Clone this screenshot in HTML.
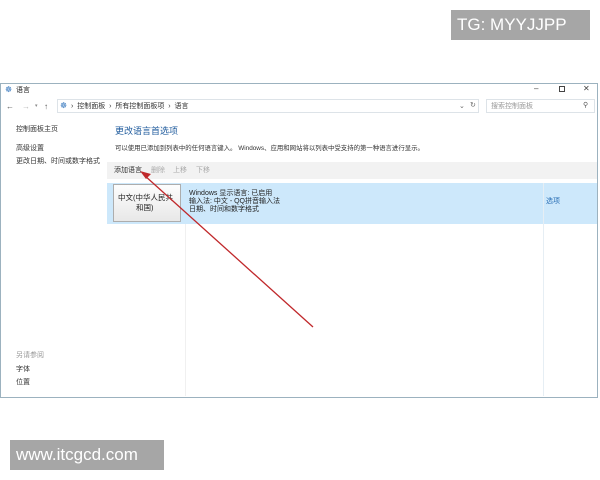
<!DOCTYPE html>
<html><head><meta charset="utf-8"><style>
*{margin:0;padding:0;box-sizing:border-box}
body{width:600px;height:480px;background:#fff;position:relative;overflow:hidden;font-family:"Liberation Sans","Noto Sans CJK SC",sans-serif;font-size:7px;color:#222}
.a{position:absolute;white-space:nowrap;line-height:1}
#win{position:absolute;left:0;top:83px;width:598px;height:315px;border:1px solid #9cb2bf;background:#fff}
.wm{position:absolute;background:#a6a6a6;color:#fff;font-size:17px;line-height:30px;padding-left:6px}
</style></head><body>
<div class="wm" style="left:451px;top:10px;width:139px;height:30px">TG: MYYJJPP</div>
<div class="wm" style="left:10px;top:440px;width:154px;height:30px">www.itcgcd.com</div>
<div id="win"></div>
<div class="a" style="left:5px;top:86px;font-size:8px;color:#3a7abf">☸</div>
<div class="a" style="left:16px;top:87px">语言</div>
<div class="a" style="left:534px;top:85px;font-size:8px;color:#444">–</div>
<div style="position:absolute;left:559px;top:86px;width:6px;height:6px;border:1px solid #444"></div>
<div class="a" style="left:583px;top:85px;font-size:8px;color:#444">✕</div>
<div class="a" style="left:6px;top:103px;font-size:8px;color:#555">←</div>
<div class="a" style="left:22px;top:103px;font-size:8px;color:#bbb">→</div>
<div class="a" style="left:35px;top:104px;font-size:5px;color:#888">▾</div>
<div class="a" style="left:44px;top:103px;font-size:8px;color:#555">↑</div>
<div style="position:absolute;left:57px;top:99px;width:422px;height:14px;border:1px solid #dde3e8"></div>
<div class="a" style="left:60px;top:102px;font-size:8px;color:#3a7abf">☸</div>
<div class="a" style="left:71px;top:103px;color:#333">›&nbsp;&nbsp;控制面板&nbsp;&nbsp;›&nbsp;&nbsp;所有控制面板项&nbsp;&nbsp;›&nbsp;&nbsp;语言</div>
<div class="a" style="left:459px;top:103px;color:#666">⌄</div>
<div class="a" style="left:470px;top:102px;color:#666">↻</div>
<div style="position:absolute;left:486px;top:99px;width:109px;height:14px;border:1px solid #dde3e8"></div>
<div class="a" style="left:491px;top:103px;color:#999">搜索控制面板</div>
<div class="a" style="left:583px;top:102px;color:#555">⚲</div>
<div class="a" style="left:16px;top:126px;color:#333">控制面板主页</div>
<div class="a" style="left:16px;top:145px;color:#333">高级设置</div>
<div class="a" style="left:16px;top:158px;color:#333">更改日期、时间或数字格式</div>
<div class="a" style="left:16px;top:352px;color:#999">另请参阅</div>
<div class="a" style="left:16px;top:366px;color:#333">字体</div>
<div class="a" style="left:16px;top:379px;color:#333">位置</div>
<div class="a" style="left:115px;top:127px;font-size:9px;color:#1e5a9c">更改语言首选项</div>
<div class="a" style="left:115px;top:146px;color:#333;font-size:6.4px">可以使用已添加到列表中的任何语言键入。 Windows、应用和网站将以列表中受支持的第一种语言进行显示。</div>
<div style="position:absolute;left:107px;top:162px;width:490px;height:17px;background:#f2f2f2"></div>
<div class="a" style="left:114px;top:167px;color:#333">添加语言</div>
<div class="a" style="left:151px;top:167px;color:#aaa">删除</div>
<div class="a" style="left:173px;top:167px;color:#aaa">上移</div>
<div class="a" style="left:196px;top:167px;color:#aaa">下移</div>
<div style="position:absolute;left:107px;top:183px;width:490px;height:41px;background:#cde8fb"></div>
<div style="position:absolute;left:185px;top:224px;width:1px;height:172px;background:#f0f0f0"></div>
<div style="position:absolute;left:543px;top:183px;width:1px;height:213px;background:#e6eef4"></div>
<div style="position:absolute;left:113px;top:184px;width:68px;height:38px;background:linear-gradient(#fdfdfd,#e8e8e8);border:1px solid #adadad"></div>
<div class="a" style="left:118px;top:194px;font-size:7.5px;color:#222">中文(中华人民共</div>
<div class="a" style="left:136px;top:204px;font-size:7.5px;color:#222">和国)</div>
<div class="a" style="left:189px;top:190px;color:#222;line-height:8px">Windows 显示语言: 已启用<br>输入法: 中文 - QQ拼音输入法<br>日期、时间和数字格式</div>
<div class="a" style="left:546px;top:198px;color:#2a6fb5">选项</div>
<svg style="position:absolute;left:0;top:0" width="600" height="480"><line x1="313" y1="327" x2="144" y2="175" stroke="#c0282b" stroke-width="1.3"/><polygon points="140,171 151,174 146,179" fill="#c0282b"/></svg>
</body></html>
